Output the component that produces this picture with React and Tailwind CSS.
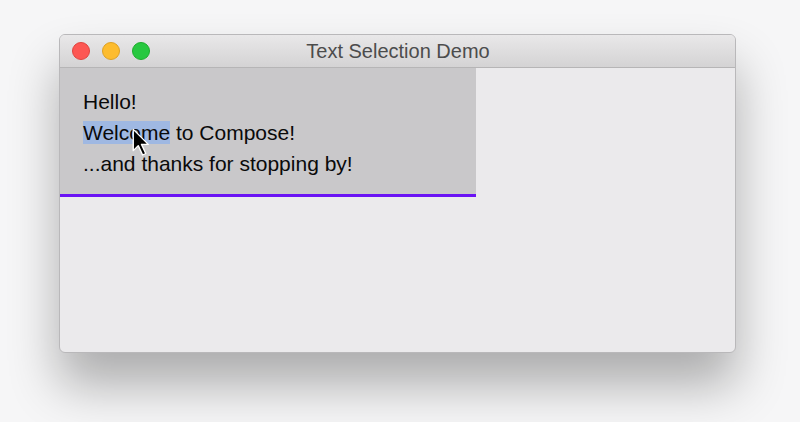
import React from "react";

export default function App() {
  return (
    <div className="w-[800px] h-[422px] bg-[#f6f6f7] overflow-hidden pt-[34px] pl-[59px]" style={{ fontFamily: '"Liberation Sans", Arial, sans-serif' }}>
      <div className="w-[677px] h-[319px] rounded-[6px] bg-[#ebeaec] border border-[#b9b8ba] shadow-[0_32px_50px_rgba(0,0,0,0.3)] flex flex-col overflow-hidden">
        <div className="relative h-[33px] shrink-0 bg-gradient-to-b from-[#e9e8e9] to-[#d4d3d4] border-b border-[#b6b5b6] flex items-center">
          <div className="flex items-center gap-[12px] pl-[12px]">
            <span className="w-[18px] h-[18px] rounded-full bg-[#fd5753] border border-[#e0443e]" />
            <span className="w-[18px] h-[18px] rounded-full bg-[#fdbc2e] border border-[#dea123]" />
            <span className="w-[18px] h-[18px] rounded-full bg-[#28c840] border border-[#1dad2b]" />
          </div>
          <div className="absolute inset-0 flex items-center justify-center text-[20px] text-[#4c4c4c] pl-[1px]">
            Text Selection Demo
          </div>
        </div>
        <div className="flex">
          <div className="w-[416px] h-[129px] bg-[#c9c8ca] border-b-[3px] border-[#6a13f4] pl-[23px] pt-[18px] text-[21px] text-[#0a0a0a] leading-[31px] relative">
            <div>Hello!</div>
            <div>
              <span className="bg-[#9fb8e2]">Welcome</span> to Compose!
            </div>
            <div>...and thanks for stopping by!</div>
            <svg className="absolute left-[72px] top-[60px]" width="20" height="29" viewBox="0 0 16 23">
              <path d="M1 1 L1 18 L5 14 L8.5 21.5 L11 20.3 L7.6 13 L13 13 Z" fill="#000" stroke="#fff" strokeWidth="1.1" strokeLinejoin="round" />
            </svg>
          </div>
        </div>
      </div>
    </div>
  );
}
